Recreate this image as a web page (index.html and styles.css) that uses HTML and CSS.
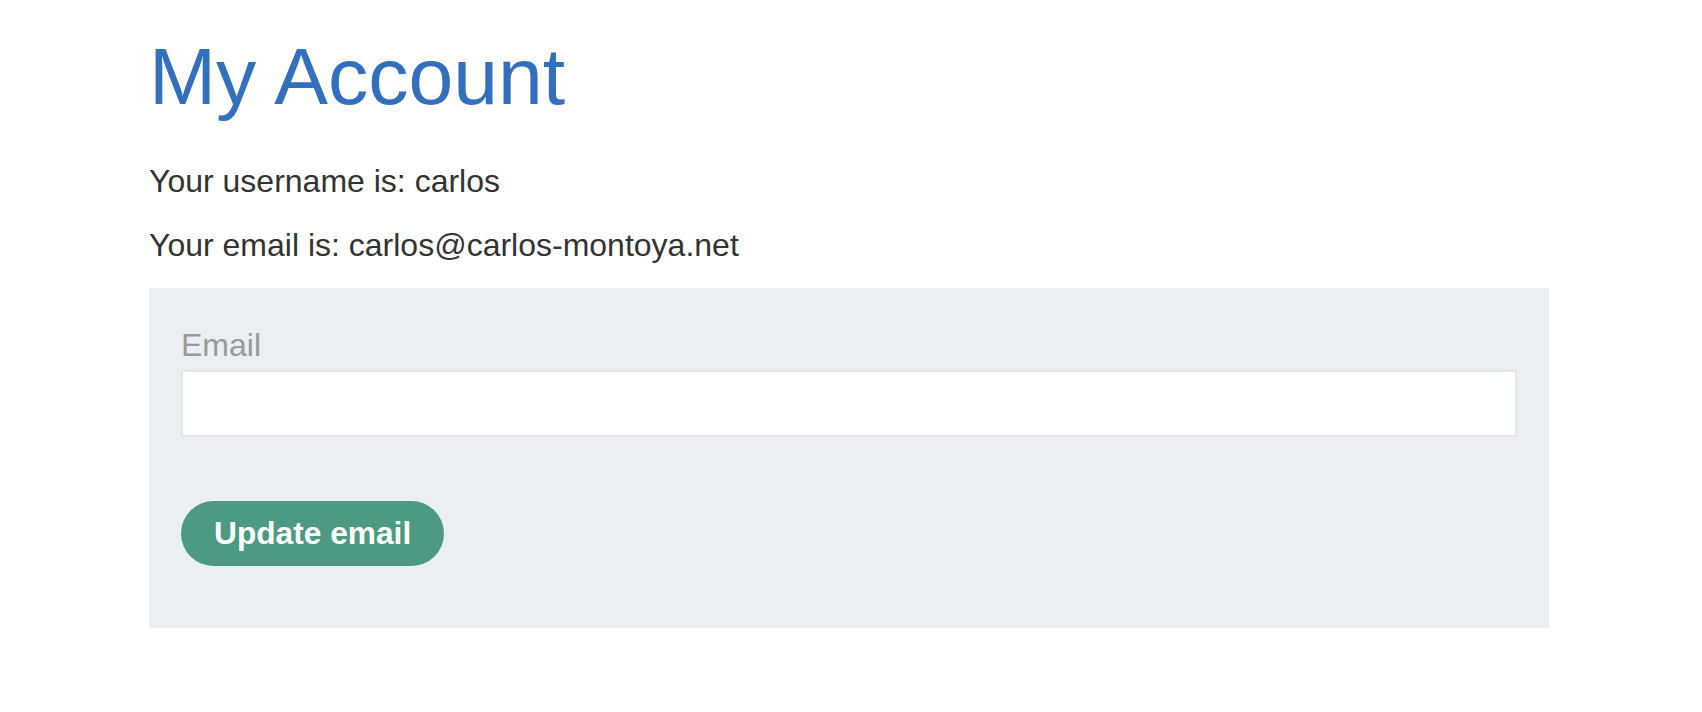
FILE: index.html
```html
<!DOCTYPE html>
<html>
<head>
<meta charset="utf-8">
<title>My Account</title>
<link rel="stylesheet" href="styles.css">
</head>
<body>
<div class="container">
  <h1 class="title">My Account</h1>
  <p class="info">Your username is: carlos</p>
  <p class="info last">Your email is: carlos@carlos-montoya.net</p>
  <form class="email-form">
    <label class="label" for="email">Email</label>
    <input class="input" id="email" type="email" name="email">
    <button class="button" type="button">Update email</button>
  </form>
</div>
</body>
</html>
```
FILE: styles.css
```css
html, body {
  margin: 0;
  padding: 0;
  background: #ffffff;
}
body {
  font-family: "Liberation Sans", Arial, Helvetica, sans-serif;
  font-size: 32px;
  color: #333332;
}
.container {
  width: 1400px;
  margin-left: 149px;
  padding-top: 30px;
}
.title {
  margin: 0 0 40px 0;
  font-size: 80.5px;
  font-weight: normal;
  line-height: normal;
  color: #3270bd;
}
.info {
  margin: 0 0 27px 0;
  line-height: normal;
}
.info.last {
  margin-bottom: 24px;
}
.email-form {
  display: flex;
  flex-direction: column;
  align-items: flex-start;
  background: #ebeff2;
  padding: 39px 32px 62px 32px;
}
.label {
  color: #999999;
  line-height: normal;
  margin-bottom: 6px;
}
.input {
  box-sizing: border-box;
  width: 100%;
  height: 67px;
  border: 2px solid #e6e6e6;
  background: #ffffff;
  margin: 0 0 64px 0;
  padding: 0 10px;
  font: inherit;
}
.button {
  box-sizing: border-box;
  height: 65px;
  padding: 0 33px;
  border: none;
  border-radius: 33px;
  background: #4c9a82;
  color: #ffffff;
  font-family: inherit;
  font-size: 31.7px;
  font-weight: bold;
  line-height: 1;
}
```
